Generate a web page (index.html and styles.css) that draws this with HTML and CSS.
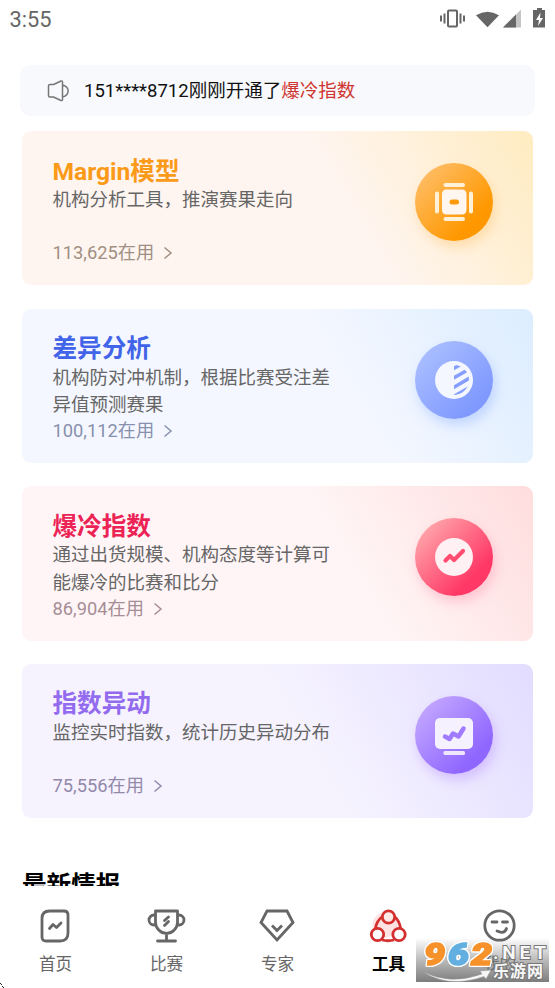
FILE: index.html
```html
<!DOCTYPE html>
<html lang="zh-CN">
<head>
<meta charset="utf-8">
<title>工具</title>
<link rel="stylesheet" href="styles.css">
</head>
<body>
<div class="screen">
  <header class="status">
    <span class="time">3:55</span>
    <svg class="status-icons" viewBox="0 0 112 24" width="112" height="24">
      <g fill="none" stroke="#666" stroke-width="2">
        <rect x="8" y="5.500" width="9" height="16" rx="1"/>
        <path d="M1 10.500v6M4.500 8.500v10M20.500 8.500v10M24 10.500v6" />
      </g>
      <path d="M36 7.500Q47.500-1 59 7.500L47.500 22Z" transform="translate(0 4) scale(1 .83)" fill="#666"/>
      <path d="M63 22.500L81 4.500V22.500Z" fill="#c4c4c4"/>
      <path d="M63 22.500L76 9.500V22.500Z" fill="#666"/>
      <path d="M94 5h3V3h5v2h3v17.500H93V5Z" fill="#666"/>
      <path d="M100.500 7.500L96 15h3l-1 6 5-8h-3Z" fill="#fff"/>
    </svg>
  </header>

  <main class="content">
    <div class="notice">
      <svg width="24" height="24" viewBox="0 0 24 24" fill="none" stroke="#777" stroke-width="1.500" stroke-linejoin="round">
        <path d="M3 5.500H6.500L14 2Q15.500 1.500 15.500 3V20.500Q15.500 22 14 21.500L6.500 18H3Q1.500 18 1.500 16.500V7Q1.500 5.500 3 5.500ZM15.500 6C23 8 23 16 15.500 18"/>
      </svg>
      <p class="notice-text">151****8712刚刚开通了<span class="hot">爆冷指数</span></p>
    </div>

    <section class="card orange">
      <div class="info">
        <h2>Margin模型</h2>
        <p class="desc">机构分析工具，推演赛果走向</p>
        <p class="count">113,625在用<svg class="arrow" viewBox="0 0 10 14"><path d="M1.500 1.500L8 7L1.500 12.500"/></svg></p>
      </div>
      <div class="badge">
        <svg viewBox="0 0 78 78">
          <g fill="#fff0d8"><rect x="28.500" y="20" width="21.500" height="4" rx="2"/><rect x="28.500" y="54" width="21.500" height="4" rx="2"/><rect x="20" y="28.500" width="4" height="22" rx="2"/><rect x="54" y="28.500" width="4" height="22" rx="2"/></g>
          <rect x="27" y="26.500" width="24.500" height="25" rx="4.500" fill="#fff6f0"/>
          <rect x="34.500" y="36.500" width="9.500" height="5" rx="2.500" fill="#ff9a0c"/>
        </svg>
      </div>
    </section>

    <section class="card blue">
      <div class="info">
        <h2>差异分析</h2>
        <p class="desc">机构防对冲机制，根据比赛受注差异值预测赛果</p>
        <p class="count">100,112在用<svg class="arrow" viewBox="0 0 10 14"><path d="M1.500 1.500L8 7L1.500 12.500"/></svg></p>
      </div>
      <div class="badge">
        <svg viewBox="0 0 78 78">
          <defs><clipPath id="half"><path d="M39 24A15 15 0 0 1 39 54Z"/></clipPath></defs>
          <circle cx="39" cy="39" r="19" fill="#f4f7ff"/>
          <g clip-path="url(#half)" stroke="#869fff" stroke-width="3.500"><path d="M36 29L50 21M36 38.500L56 27M36 48L58 35M36 57L58 44.500"/></g>
        </svg>
      </div>
    </section>

    <section class="card red">
      <div class="info">
        <h2>爆冷指数</h2>
        <p class="desc">通过出货规模、机构态度等计算可能爆冷的比赛和比分</p>
        <p class="count">86,904在用<svg class="arrow" viewBox="0 0 10 14"><path d="M1.500 1.500L8 7L1.500 12.500"/></svg></p>
      </div>
      <div class="badge">
        <svg viewBox="0 0 78 78">
          <circle cx="39" cy="39" r="19" fill="#fff0f3"/>
          <path d="M30.500 42.500L35 38L39 42L48 33" fill="none" stroke="#ff4c70" stroke-width="4.200" stroke-linecap="round" stroke-linejoin="round"/>
        </svg>
      </div>
    </section>

    <section class="card purple">
      <div class="info">
        <h2>指数异动</h2>
        <p class="desc">监控实时指数，统计历史异动分布</p>
        <p class="count">75,556在用<svg class="arrow" viewBox="0 0 10 14"><path d="M1.500 1.500L8 7L1.500 12.500"/></svg></p>
      </div>
      <div class="badge">
        <svg viewBox="0 0 78 78">
          <rect x="20" y="22" width="38" height="31" rx="5" fill="#f5f1ff"/>
          <rect x="28.500" y="55" width="21.500" height="4" rx="1.500" fill="#eee5ff"/>
          <path d="M30 40.500L34.500 43L38 37.500L43.500 40.500L48.500 32.500" fill="none" stroke="#a07bff" stroke-width="4.500" stroke-linecap="round" stroke-linejoin="round"/>
        </svg>
      </div>
    </section>

    <h3 class="latest">最新情报</h3>
  </main>

  <nav class="tabs">
    <a class="tab">
      <svg viewBox="0 0 40 36" fill="none" stroke="#666" stroke-width="2.800" stroke-linecap="round" stroke-linejoin="round">
        <path d="M14.500 3H29Q33 3 33 7V25Q33 33 25 33H11Q7 33 7 29V10.500Q7 3 14.500 3Z"/>
        <path d="M14.500 20.500L18 16.500L21.500 19.500L26 15"/>
      </svg>
      <span>首页</span>
    </a>
    <a class="tab">
      <svg viewBox="0 0 40 36" fill="none" stroke="#666" stroke-width="2.800" stroke-linecap="round" stroke-linejoin="round">
        <path d="M9.500 3H31.500V14.500C31.500 20 26.500 25.500 20.500 25.500S9.500 20 9.500 14.500ZM20.500 25.500V33M11.500 33H29.500M9 7H8A5 5 0 0 0 8 17H10M32 7H33A5 5 0 0 1 33 17H31M22.500 9L18.500 12.500M22.500 13.500L18.500 17.500" />
      </svg>
      <span>比赛</span>
    </a>
    <a class="tab">
      <svg viewBox="0 0 40 36" fill="none" stroke="#666" stroke-width="2.800" stroke-linejoin="miter">
        <path d="M10 3H30L36 14.500L20 32L4 14.500ZM15 17.500L20 22.500L25 17.500"/>
      </svg>
      <span>专家</span>
    </a>
    <a class="tab active">
      <svg viewBox="0 0 40 36" fill="none" stroke="#d3302f" stroke-width="2.800">
        <circle cx="17" cy="17" r="12.500" fill="#ffe3e3" stroke="none"/>
        <path d="M14.500 8.500Q8.500 13 7.500 20M26.500 8.500Q31.500 13 32.500 20M14 32Q20 33.500 26 32"/>
        <circle cx="20.500" cy="9" r="6.200" fill="#ffe9e9"/>
        <circle cx="9.500" cy="26.500" r="6.200" fill="#fff"/>
        <circle cx="31" cy="26.500" r="6.200" fill="#fff"/>
      </svg>
      <span>工具</span>
    </a>
    <a class="tab">
      <svg viewBox="0 0 40 36" fill="none" stroke="#666" stroke-width="2.800" stroke-linecap="round">
        <circle cx="20.500" cy="17.500" r="14.700"/>
        <path d="M13 14H18M23.500 14H28.500M18 23Q25.500 26.500 27.500 20.500"/>
      </svg>
      <span>我的</span>
    </a>
  </nav>

  <svg class="corner" width="5" height="5" viewBox="0 0 5 5"><path d="M0 .5h1M1 1.500h1M2 3.500h1M3 4.500h1" stroke="#222"/></svg>

  <svg class="watermark" width="133" height="44" viewBox="0 0 133 44">
    <defs>
      <linearGradient id="fade" x2="0" y2="1"><stop stop-color="#777" stop-opacity="0"/><stop offset=".5" stop-color="#777" stop-opacity=".5"/><stop offset="1" stop-color="#777" stop-opacity=".96"/></linearGradient>
    </defs>
    <rect width="133" height="44" fill="url(#fade)"/>
    <path d="M6 33Q33 48 66 36L64 33L75 32L70 41L68 38.500Q32 51 6 33Z" fill="#f6f6f6" stroke="#999" stroke-width=".5"/>
    <g class="digits">
      <text x="8" y="26.500" textLength="21" lengthAdjust="spacingAndGlyphs" fill="#f7922b" stroke="#f7922b">9</text>
      <text x="32" y="26.500" textLength="21" lengthAdjust="spacingAndGlyphs" fill="#62afe0" stroke="#62afe0">6</text>
      <text x="55" y="26.500" textLength="21" lengthAdjust="spacingAndGlyphs" fill="#f7922b" stroke="#f7922b">2</text>
    </g>
    <text class="net" x="77" y="20.500" textLength="53">.NET</text>
    <text class="site" x="77" y="39" textLength="50">乐游网</text>
  </svg>
</div>
</body>
</html>
```
FILE: styles.css
```css
* { box-sizing: border-box; }
body, h2, h3, p { margin: 0; }
body {
  background: #fff;
  font-family: Roboto, "Noto Sans CJK SC", sans-serif;
}
.screen {
  position: relative;
  width: 555px;
  height: 988px;
  overflow: hidden;
  display: flex;
  flex-direction: column;
}
.status {
  flex: none;
  height: 65px;
  padding: 5px 3px 0 9.500px;
  display: flex;
  justify-content: space-between;
  align-items: flex-start;
}
.time {
  font-size: 21.800px;
  line-height: 29px;
  color: #666;
  font-weight: 450;
}
.content {
  flex: none;
  height: 821px;
  overflow: hidden;
  padding: 0 22px;
}
.notice {
  height: 51px;
  margin: 0 -2px 15px;
  padding: 0 27px;
  display: flex;
  align-items: center;
  gap: 13px;
  border-radius: 11px;
  background: #f8f9fd;
}
.notice svg { flex: none; }
.notice-text {
  padding-top: 1px;
  font-size: 18.500px;
  line-height: 28px;
  color: #111;
  white-space: nowrap;
}
.hot { color: #cf3530; }
.card {
  height: 154.400px;
  margin-bottom: 23.200px;
  padding: 24.500px 40px 0 30.500px;
  display: flex;
  justify-content: space-between;
  border-radius: 9px;
}
.info { width: 282px; }
h2 {
  font-size: 24.600px;
  line-height: 31.500px;
  font-weight: 700;
}
.desc {
  height: 53.400px;
  font-size: 18.500px;
  line-height: 27.700px;
  color: #666;
}
.count {
  display: flex;
  align-items: center;
  font-size: 18.300px;
  line-height: 26px;
}
.arrow {
  width: 10px;
  height: 14px;
  margin-left: 9px;
  fill: none;
  stroke: currentColor;
  stroke-width: 1.500;
}
.badge {
  width: 78px;
  height: 78px;
  margin-top: 7.800px;
  border-radius: 50%;
}
.badge svg { display: block; width: 78px; height: 78px; }
.orange { background: linear-gradient(60deg, #fff5f0 62%, #ffecc1 100%); }
.orange h2 { color: #fb9a18; }
.orange .count { color: #a08f83; }
.orange .badge { background: linear-gradient(135deg, #ffbd66 10%, #ff9800 75%); box-shadow: 3px 6px 12px #ffcf8b99; }
.blue { background: linear-gradient(60deg, #f4f7ff 62%, #dcedff 100%); }
.blue h2 { color: #4164e8; }
.blue .count { color: #8791ae; }
.blue .badge { background: linear-gradient(135deg, #abbfff 10%, #7f99ff 80%); box-shadow: 3px 6px 12px #a9c4ffa0; }
.red { background: linear-gradient(60deg, #fff5f6 62%, #ffdddd 100%); }
.red h2 { color: #ec2456; }
.red .count { color: #a68d95; }
.red .badge { background: linear-gradient(135deg, #ffabad 8%, #ff3866 75%); box-shadow: 3px 6px 12px #ffa7bc90; }
.purple { background: linear-gradient(60deg, #f6f3ff 55%, #e2dcff 100%); }
.purple h2 { color: #936bef; }
.purple .count { color: #9389ab; }
.purple .badge { background: linear-gradient(135deg, #c3a7ff 10%, #8f66ff 78%); box-shadow: 3px 6px 12px #c6a8ffa0; }
.latest {
  padding-top: 27px;
  font-size: 24.600px;
  line-height: 36px;
  font-weight: 700;
  color: #000;
}
.tabs {
  flex: 1;
  display: flex;
  background: #fff;
  padding-top: 21.500px;
}
.tab {
  width: 111px;
  display: flex;
  flex-direction: column;
  align-items: center;
  gap: 9px;
  color: #666;
  font-size: 16.600px;
  line-height: 24px;
}
.tab svg { width: 40px; height: 36px; margin-left: -2px; }
.active { color: #000; font-weight: 600; }
.corner { position: absolute; left: 0; bottom: 0; }
.watermark { position: absolute; left: 416px; top: 938px; }
.digits {
  font: italic 900 32px Roboto, sans-serif;
  stroke-width: 1.600px;
  filter: drop-shadow(1px 0 0 #fff) drop-shadow(-1px 0 0 #fff) drop-shadow(0 1px 0 #fff) drop-shadow(0 -1px 0 #fff);
}
.net, .site {
  fill: #f8f8f8;
  stroke: #777;
  stroke-width: 2px;
  paint-order: stroke;
}
.net { font: 700 19px Roboto, sans-serif; }
.site { font: 700 16px "Noto Sans CJK SC", sans-serif; }
```
